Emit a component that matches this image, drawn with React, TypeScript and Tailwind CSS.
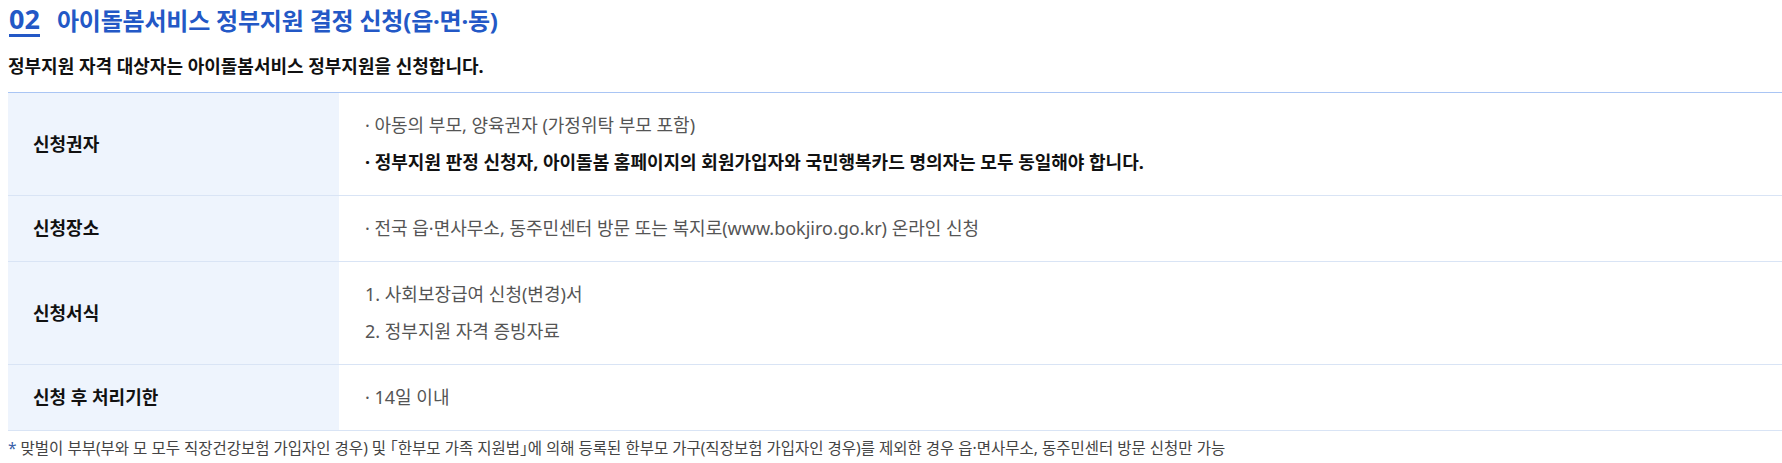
import React from 'react';

const rows = [
  {
    label: '신청권자',
    lines: [
      { text: '· 아동의 부모, 양육권자 (가정위탁 부모 포함)' },
      { text: '· 정부지원 판정 신청자, 아이돌봄 홈페이지의 회원가입자와 국민행복카드 명의자는 모두 동일해야 합니다.', bold: true },
    ],
  },
  {
    label: '신청장소',
    lines: [{ text: '· 전국 읍·면사무소, 동주민센터 방문 또는 복지로(www.bokjiro.go.kr) 온라인 신청' }],
  },
  {
    label: '신청서식',
    lines: [{ text: '1. 사회보장급여 신청(변경)서' }, { text: '2. 정부지원 자격 증빙자료' }],
  },
  {
    label: '신청 후 처리기한',
    lines: [{ text: '· 14일 이내' }],
  },
];

export default function App() {
  return (
    <div className="w-[1782px] h-[463px] bg-white pl-[8px] font-['Noto_Sans','Noto_Sans_CJK_KR',sans-serif] text-[#111]">
      <h2 className="flex items-center h-[41px] pl-[1px] text-[24px] font-bold text-[#2358c6] tracking-[-0.2px]">
        <span className="text-[27px] leading-[30px] border-b-[3px] border-[#2358c6] mr-[17px] tracking-[0px]">02</span>
        <span>아이돌봄서비스 정부지원 결정 신청(읍·면·동)</span>
      </h2>
      <p className="h-[51px] flex items-center text-[18px] font-bold">
        정부지원 자격 대상자는 아이돌봄서비스 정부지원을 신청합니다.
      </p>
      <div className="border-t border-[#a9c5f4]">
        {rows.map((r) => (
          <div key={r.label} className="flex border-b border-[#d9e4f5]">
            <div className="w-[331px] shrink-0 bg-[#eef4fd] flex items-center pl-[25px] text-[18px] font-bold">
              {r.label}
            </div>
            <div className="flex-1 flex flex-col justify-center gap-[8px] py-[18px] pl-[26px] text-[18px] text-[#555]">
              {r.lines.map((l) => (
                <p key={l.text} className={l.bold ? 'leading-[29px] font-bold text-[#111]' : 'leading-[29px]'}>
                  {l.text}
                </p>
              ))}
            </div>
          </div>
        ))}
      </div>
      <p className="mt-[6px] text-[15.5px] text-[#444]">
        <span className="text-[#3b5fa8]">*</span> 맞벌이 부부(부와 모 모두 직장건강보험 가입자인 경우) 및 ｢한부모 가족 지원법｣에 의해 등록된 한부모 가구(직장보험 가입자인 경우)를 제외한 경우 읍·면사무소, 동주민센터 방문 신청만 가능
      </p>
    </div>
  );
}
